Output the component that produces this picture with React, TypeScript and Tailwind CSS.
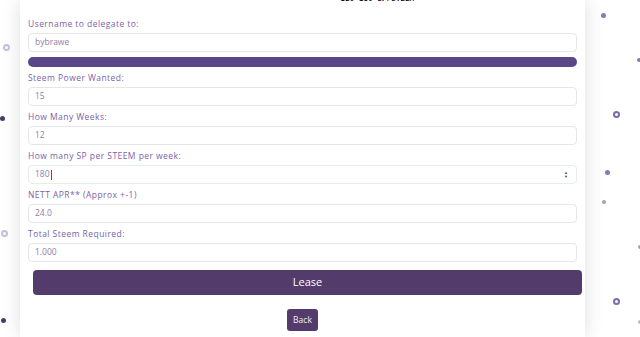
import React from 'react';

const dots = [
  { x: 3, y: 44, s: 7, ring: true, c: '#c9bfdc' },
  { x: 0, y: 116, s: 5, ring: false, c: '#4b3b6b' },
  { x: 1, y: 230, s: 7, ring: true, c: '#c9bfdc' },
  { x: 1, y: 318, s: 5, ring: false, c: '#4b3b6b' },
  { x: 601, y: 13, s: 5, ring: false, c: '#8a78b0' },
  { x: 637, y: 58, s: 4, ring: false, c: '#8a78b0' },
  { x: 613, y: 111, s: 7, ring: true, c: '#7e6aa8' },
  { x: 605, y: 170, s: 5, ring: false, c: '#8a78b0' },
  { x: 602, y: 200, s: 4, ring: false, c: '#a99bc6' },
  { x: 638, y: 245, s: 4, ring: false, c: '#a99bc6' },
  { x: 613, y: 298, s: 7, ring: true, c: '#7e6aa8' },
  { x: 638, y: 320, s: 4, ring: false, c: '#c0b6d6' },
];

const fields: { label: string; value: string; spin?: boolean }[] = [
  { label: 'Steem Power Wanted:', value: '15' },
  { label: 'How Many Weeks:', value: '12' },
  { label: 'How many SP per STEEM per week:', value: '180', spin: true },
  { label: 'NETT APR** (Approx +-1)', value: '24.0' },
  { label: 'Total Steem Required:', value: '1.000' },
];

function Label({ children }: { children: React.ReactNode }) {
  return (
    <div className="mb-[3px] h-[12px] text-[8.5px] leading-[12px] font-medium tracking-[0.45px] text-[#7a5fa8]">
      {children}
    </div>
  );
}

function Input({ value, spin }: { value: string; spin?: boolean }) {
  return (
    <div
      className={`flex h-[19px] items-center rounded-[4px] border bg-white pl-[6px] pr-[8px] text-[8.5px] text-[#8c7fa6] ${
        spin ? 'border-[#e2efea]' : 'border-[#e6e6e6]'
      }`}
    >
      <span>{value}</span>
      {spin && <span className="ml-[1px] h-[10px] w-[1px] bg-[#555]" />}
      {spin && (
        <span className="ml-auto flex flex-col items-center text-[4px] leading-[4px] text-[#444]">
          <span>▲</span>
          <span>▼</span>
        </span>
      )}
    </div>
  );
}

export default function App() {
  return (
    <div
      className="relative h-[337px] w-[640px] overflow-hidden bg-white"
      style={{ fontFamily: '"Open Sans", "Liberation Sans", sans-serif' }}
    >
      {dots.map((d, i) => (
        <span
          key={i}
          className="absolute rounded-full"
          style={{
            left: d.x,
            top: d.y,
            width: d.s,
            height: d.s,
            background: d.ring ? 'transparent' : d.c,
            border: d.ring ? `2px solid ${d.c}` : undefined,
          }}
        />
      ))}

      <div className="relative ml-[20px] h-[337px] w-[565px] bg-white px-[8px] shadow-[0_0_18px_rgba(0,0,0,0.13)]">
        <div className="flex h-[18px] justify-center pl-[150px]">
          <span className="mt-[-6px] h-[10px] font-['Liberation_Mono',monospace] text-[7.2px] font-bold leading-[10px] tracking-[0.3px] text-black">
            120-150 SP/STEEM
          </span>
        </div>

        <Label>Username to delegate to:</Label>
        <Input value="bybrawe" />
        <div className="mt-[5px] h-[10px] rounded-full bg-[#5a4787]" />
        <div className="h-[5px]" />

        {fields.map((f) => (
          <div key={f.label} className="pb-[5px]">
            <Label>{f.label}</Label>
            <Input value={f.value} spin={f.spin} />
          </div>
        ))}

        <button
          type="button"
          className="mt-[3px] ml-[5px] flex h-[25px] w-[549px] items-center justify-center rounded-[4px] bg-[#533c6c] text-[11px] text-white"
        >
          Lease
        </button>

        <div className="mt-[14px] flex justify-center">
          <button
            type="button"
            className="flex h-[22px] w-[31px] items-center justify-center rounded-[3px] bg-[#533c6c] text-[8.5px] text-[#eee]"
          >
            Back
          </button>
        </div>
      </div>
    </div>
  );
}
